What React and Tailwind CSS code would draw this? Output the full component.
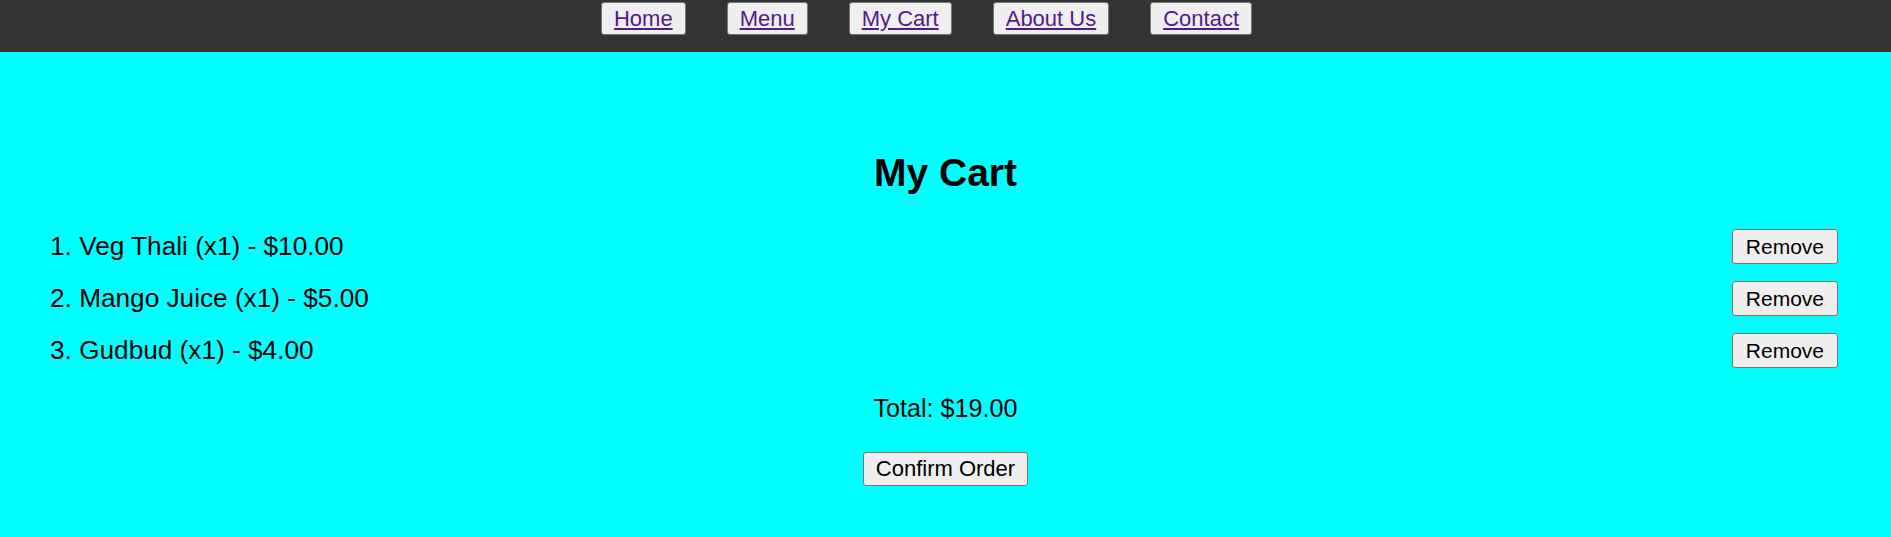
import React from "react";

const navItems = ["Home", "Menu", "My Cart", "About Us", "Contact"];
const items = [
  { name: "Veg Thali", qty: 1, price: 10 },
  { name: "Mango Juice", qty: 1, price: 5 },
  { name: "Gudbud", qty: 1, price: 4 },
];

export default function App() {
  const total = items.reduce((s, i) => s + i.price * i.qty, 0);
  return (
    <div
      className="min-h-screen bg-[#00ffff] text-black"
      style={{ fontFamily: '"Liberation Sans", Arial, sans-serif' }}
    >
      <nav className="h-[52px] bg-[#333333] flex justify-center items-start gap-[41px] pt-[2px] pr-[38px]">
        {navItems.map((n) => (
          <button
            key={n}
            className="bg-[#efefef] border border-[#767676] rounded-[3px] px-[12px] py-[3px] text-[22px] leading-[25px]"
          >
            <a href="#" className="underline text-[#551a8b]">
              {n}
            </a>
          </button>
        ))}
      </nav>
      <main className="pt-[98px] flex flex-col items-stretch">
        <h2 className="text-center text-[39px] leading-[45px] font-bold">My Cart</h2>
        <ul className="mt-[25px] pl-[50px] pr-[53px]">
          {items.map((it, idx) => (
            <li key={it.name} className="h-[52px] flex items-center justify-between">
              <span className="text-[26.2px] leading-[30px]">
                {idx + 1}. {it.name} (x{it.qty}) - ${it.price.toFixed(2)}
              </span>
              <button className="bg-[#efefef] border border-[#767676] rounded-[3px] px-[13px] py-[4px] text-[21px] leading-[25px]">
                Remove
              </button>
            </li>
          ))}
        </ul>
        <p className="mt-[18px] text-center text-[25.2px] leading-[29px]">
          Total: ${total.toFixed(2)}
        </p>
        <div className="mt-[29px] flex justify-center">
          <button className="bg-[#efefef] border border-[#767676] rounded-[3px] px-[12px] py-[3px] text-[22px] leading-[26px]">
            Confirm Order
          </button>
        </div>
      </main>
    </div>
  );
}
